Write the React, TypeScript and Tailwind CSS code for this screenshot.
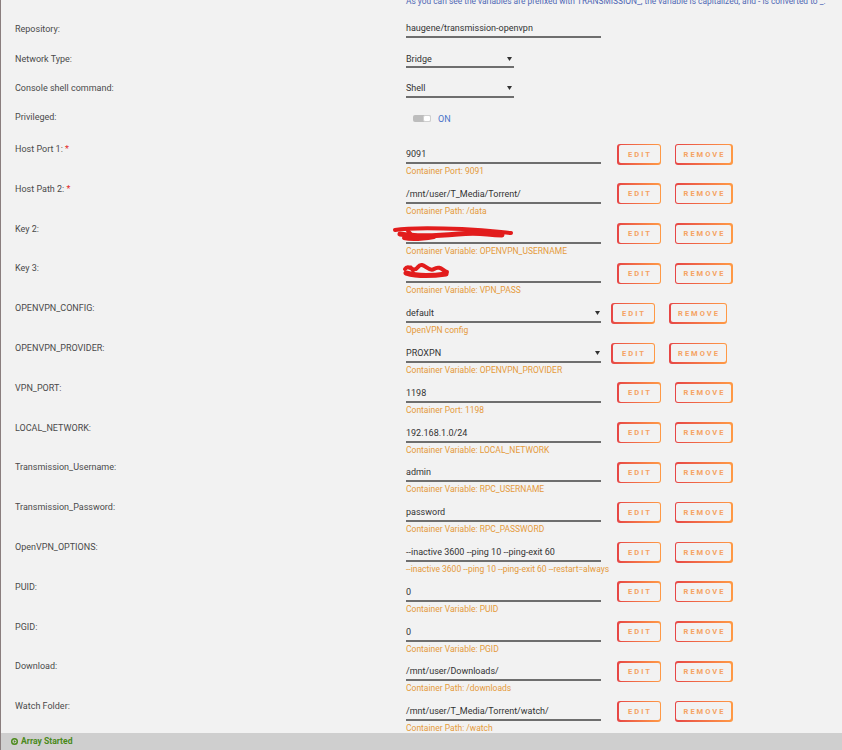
import React from "react";

type Row = {
  label: string;
  req?: boolean;
  value: string;
  desc: string;
  select?: boolean;
  scribble?: 1 | 2;
};

const rows: Row[] = [
  { label: "Host Port 1:", req: true, value: "9091", desc: "Container Port: 9091" },
  { label: "Host Path 2:", req: true, value: "/mnt/user/T_Media/Torrent/", desc: "Container Path: /data" },
  { label: "Key 2:", value: "", desc: "Container Variable: OPENVPN_USERNAME", scribble: 1 },
  { label: "Key 3:", value: "", desc: "Container Variable: VPN_PASS", scribble: 2 },
  { label: "OPENVPN_CONFIG:", value: "default", desc: "OpenVPN config", select: true },
  { label: "OPENVPN_PROVIDER:", value: "PROXPN", desc: "Container Variable: OPENVPN_PROVIDER", select: true },
  { label: "VPN_PORT:", value: "1198", desc: "Container Port: 1198" },
  { label: "LOCAL_NETWORK:", value: "192.168.1.0/24", desc: "Container Variable: LOCAL_NETWORK" },
  { label: "Transmission_Username:", value: "admin", desc: "Container Variable: RPC_USERNAME" },
  { label: "Transmission_Password:", value: "password", desc: "Container Variable: RPC_PASSWORD" },
  { label: "OpenVPN_OPTIONS:", value: "--inactive 3600 --ping 10 --ping-exit 60", desc: "--inactive 3600 --ping 10 --ping-exit 60 --restart=always" },
  { label: "PUID:", value: "0", desc: "Container Variable: PUID" },
  { label: "PGID:", value: "0", desc: "Container Variable: PGID" },
  { label: "Download:", value: "/mnt/user/Downloads/", desc: "Container Path: /downloads" },
  { label: "Watch Folder:", value: "/mnt/user/T_Media/Torrent/watch/", desc: "Container Path: /watch" },
];

function Arrow() {
  return (
    <svg width="5" height="4" viewBox="0 0 5 4" className="shrink-0">
      <path d="M0 0 L5 0 L2.5 4 Z" fill="#333" />
    </svg>
  );
}

function Btn({ label, w }: { label: string; w: string }) {
  return (
    <div className={`${w} h-[21px] rounded-[3px] bg-linear-to-r from-[#e64545] to-[#ff9a45] p-[1.5px]`}>
      <div className="h-full w-full rounded-[2px] bg-[#f2f2f2] flex items-center justify-center text-[7.5px] font-bold tracking-[2px] text-[#f5a262] pl-[2px]">
        {label}
      </div>
    </div>
  );
}

function Scribble({ kind }: { kind: 1 | 2 }) {
  if (kind === 1) {
    return (
      <svg width="124" height="20" viewBox="0 0 124 20" className="absolute left-[-14px] top-[4px]">
        <g stroke="#e21c1c" strokeLinecap="round" strokeLinejoin="round" fill="none">
          <path d="M3 6 C 20 3, 45 4, 70 5 S 100 7, 119 9" strokeWidth="4" />
          <path d="M8 10 C 25 13, 45 12, 66 10 S 90 10, 110 11" strokeWidth="5" />
          <path d="M12 14 C 20 16, 30 15, 42 13" strokeWidth="4" />
          <path d="M16 7 L 22 14" strokeWidth="4" />
        </g>
      </svg>
    );
  }
  return (
    <svg width="50" height="18" viewBox="0 0 50 18" className="absolute left-[-4px] top-[3px]">
      <g stroke="#e21c1c" strokeLinecap="round" strokeLinejoin="round" fill="none">
        <path d="M3 7 C 7 1, 11 12, 16 5 S 26 11, 32 7 S 41 9, 45 10" strokeWidth="4" />
        <path d="M4 11 C 14 14, 30 14, 44 12" strokeWidth="5" />
        <path d="M9 5 L 12 12" strokeWidth="3" />
      </g>
    </svg>
  );
}

export default function App() {
  return (
    <div
      className="h-[750px] w-[842px] flex flex-col overflow-hidden bg-[#f2f2f2] border-l border-[#8a7e7e]"
      style={{ fontFamily: "Roboto, 'Liberation Sans', sans-serif" }}
    >
      <div className="flex-1 overflow-hidden">
        {/* top help line */}
        <div className="h-[16px] overflow-hidden pl-[405px]">
          <div className="-mt-[5px] leading-[12px] text-[8.4px] text-[#5068b5] whitespace-nowrap">
            As you can see the variables are prefixed with TRANSMISSION_, the variable is capitalized, and - is converted to _.
          </div>
        </div>

        {/* Repository */}
        <div className="flex h-[30px]">
          <div className="w-[405px] pl-[14px] pt-[7px] leading-[12px] text-[9px] text-[#4a4a4a]">Repository:</div>
          <div className="w-[195px] pt-[4.5px] pb-[1px] leading-[14px] h-[21.5px] border-b-2 border-[#6e6e6e] text-[9px] text-[#333]">
            haugene/transmission-openvpn
          </div>
        </div>

        {/* Network Type */}
        <div className="flex h-[30px]">
          <div className="w-[405px] pl-[14px] pt-[6.7px] leading-[12px] text-[9px] text-[#4a4a4a]">Network Type:</div>
          <div className="w-[108px] pt-[5.5px] leading-[14px] h-[21.5px] border-b-2 border-[#6e6e6e] text-[9px] text-[#333] flex items-start justify-between pr-[2px]">
            <span>Bridge</span>
            <span className="mt-[5px]"><Arrow /></span>
          </div>
        </div>

        {/* Console shell */}
        <div className="flex h-[30px]">
          <div className="w-[405px] pl-[14px] pt-[6.3px] leading-[12px] text-[9px] text-[#4a4a4a]">Console shell command:</div>
          <div className="w-[108px] pt-[5.3px] leading-[14px] h-[21.5px] border-b-2 border-[#6e6e6e] text-[9px] text-[#333] flex items-start justify-between pr-[2px]">
            <span>Shell</span>
            <span className="mt-[5px]"><Arrow /></span>
          </div>
        </div>

        {/* Privileged */}
        <div className="flex h-[34px]">
          <div className="w-[405px] pl-[14px] pt-[5.3px] leading-[12px] text-[9px] text-[#4a4a4a]">Privileged:</div>
          <div className="flex items-center gap-[7px] pt-[4px] h-[14px] mt-[3.5px]">
            <div className="ml-[7px] w-[18px] h-[7px] rounded-[2px] bg-[#bdbdbd] flex justify-end items-center">
              <div className="w-[8px] h-[7px] rounded-[2px] bg-white border border-[#d0d0d0]" />
            </div>
            <span className="text-[9px] leading-[12px] text-[#4a74c9]">ON</span>
          </div>
        </div>

        {rows.map((r, i) => (
          <div key={i} className="flex h-[39.8px]">
            <div className="w-[405px] pl-[14px] pt-[3px] leading-[12px] text-[9px] text-[#4a4a4a]">
              {r.label}
              {r.req && <span className="text-[#e22828]"> *</span>}
            </div>
            <div className="flex items-start">
              <div className="w-[195px] flex flex-col">
                <div className="relative h-[24px] pt-[7px] pb-[1px] leading-[14px] border-b-2 border-[#6e6e6e] text-[9px] text-[#333] flex items-start justify-between pr-[1px]">
                  <span className="whitespace-nowrap">{r.value}</span>
                  {r.select && <span className="mt-[5px]"><Arrow /></span>}
                  {r.scribble && <Scribble kind={r.scribble} />}
                </div>
                <div className="mt-[1px] leading-[12px] text-[8.5px] text-[#e59a3b] whitespace-nowrap">{r.desc}</div>
              </div>
              <div className={`flex mt-[3.7px] ${r.select ? "ml-[10px] gap-[14px]" : "ml-[16px] gap-[13.5px]"}`}>
                <Btn label="EDIT" w="w-[44px]" />
                <Btn label="REMOVE" w="w-[58px]" />
              </div>
            </div>
          </div>
        ))}
      </div>

      <div className="h-[17.3px] shrink-0 bg-[#cfcfcf] flex items-center pl-[10px] gap-[3px]">
        <svg width="7" height="7" viewBox="0 0 10 10">
          <circle cx="5" cy="5" r="4" fill="none" stroke="#4a8a1a" strokeWidth="2" />
          <path d="M4 3 L7 5 L4 7 Z" fill="#4a8a1a" />
        </svg>
        <span className="text-[8.6px] font-bold text-[#4a8a1a] leading-[10px]">Array Started</span>
      </div>
    </div>
  );
}
